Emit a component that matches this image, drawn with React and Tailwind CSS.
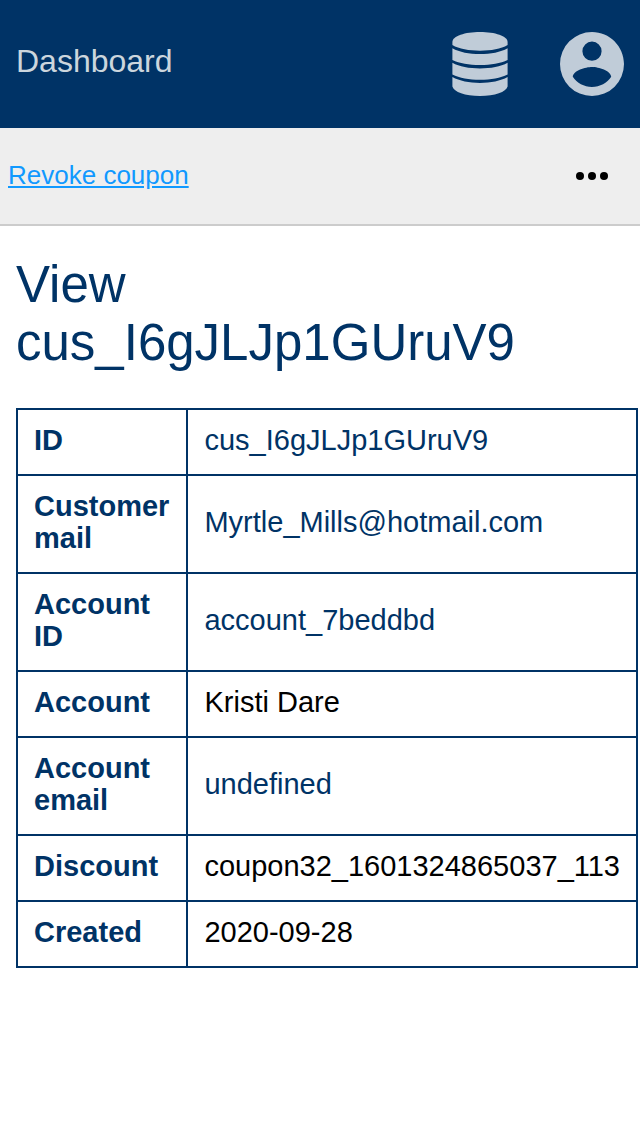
const rows = [
  { label: 'ID', value: 'cus_I6gJLJp1GUruV9', href: '#customer' },
  { label: 'Customer mail', value: 'Myrtle_Mills@hotmail.com', href: '#customer-mail' },
  { label: 'Account ID', value: 'account_7beddbd', href: '#account' },
  { label: 'Account', value: 'Kristi Dare' },
  { label: 'Account email', value: 'undefined', href: '#account-email' },
  { label: 'Discount', value: 'coupon32_1601324865037_113' },
  { label: 'Created', value: '2020-09-28' },
];

function DatabaseIcon() {
  return (
    <svg viewBox="0 0 56 64" className="h-16 w-14" fill="currentColor" aria-hidden="true">
      <path d="M.4 10C.4 4 13 0 28 0S55.600 4 55.600 10V13C49 17 39 18.700 28 18.700S7 17 .4 13Z" />
      <path d="M.4 16.200C7.500 20.200 17 22 28 22S48.500 20.200 55.600 16.200V28C48.500 31.400 39 33 28 33S7.500 31.400 .4 28Z" />
      <path d="M.4 30.800C7.500 34.800 17 36.500 28 36.500S48.500 34.800 55.600 30.800V42.400C48.500 46 39 47.700 28 47.700S7.500 46 .4 42.400Z" />
      <path d="M.4 45C7.500 49 17 50.900 28 50.900S48.500 49 55.600 45V54.500C54 60 43 64 28 64S2 60 .4 54.500Z" />
    </svg>
  );
}

function AccountIcon() {
  return (
    <svg viewBox="2 2 20 20" className="size-16" fill="currentColor" aria-hidden="true">
      <path d="M12,19.2C9.5,19.2 7.29,17.92 6,16C6.03,14 10,12.9 12,12.9C14,12.9 17.97,14 18,16C16.71,17.92 14.5,19.2 12,19.2M12,5A3,3 0 0,1 15,8A3,3 0 0,1 12,11A3,3 0 0,1 9,8A3,3 0 0,1 12,5M12,2A10,10 0 0,0 2,12A10,10 0 0,0 12,22A10,10 0 0,0 22,12C22,6.47 17.5,2 12,2Z" />
    </svg>
  );
}

export default function App() {
  return (
    <div className="min-h-screen bg-white font-['Liberation_Sans',Arial,sans-serif] text-black">
      <header className="flex h-32 items-center justify-between bg-[#003366] px-4 text-[#c0ccd8]">
        <a href="#dashboard" className="pb-1.5 text-[32px] leading-9 text-[#ccd6dd]">Dashboard</a>
        <div className="flex items-center gap-[52px]">
          <button type="button" aria-label="Database"><DatabaseIcon /></button>
          <button type="button" aria-label="Account"><AccountIcon /></button>
        </div>
      </header>
      <nav className="flex h-[98px] items-center justify-between border-b-2 border-[#cccccc] bg-[#eeeeee] pr-8 pl-2">
        <a href="#revoke" className="pb-0.5 text-[26px] leading-8 text-[#1199ff] underline">Revoke coupon</a>
        <button type="button" aria-label="More actions">
          <svg viewBox="0 0 32 8" className="h-2 w-8" fill="currentColor" aria-hidden="true">
            <circle cx="4" cy="4" r="4" />
            <circle cx="16" cy="4" r="4" />
            <circle cx="28" cy="4" r="4" />
          </svg>
        </button>
      </nav>
      <main className="pt-[30px] pr-0.5 pl-4">
        <h1 className="mb-9 text-[51px] leading-[58px] break-words text-[#003366]">View cus_I6gJLJp1GUruV9</h1>
        <table className="w-full border-collapse border-2 border-[#003366] text-[29px] leading-8">
          <tbody>
            {rows.map(({ label, value, href }) => (
              <tr key={label}>
                <th scope="row" className="border-2 border-[#003366] px-4 pt-3.5 pb-[18px] text-left font-bold text-[#003366]">{label}</th>
                <td className="border-2 border-[#003366] px-4 pt-3.5 pb-[18px]">
                  {href ? <a href={href} className="text-[#003366]">{value}</a> : value}
                </td>
              </tr>
            ))}
          </tbody>
        </table>
      </main>
    </div>
  );
}
